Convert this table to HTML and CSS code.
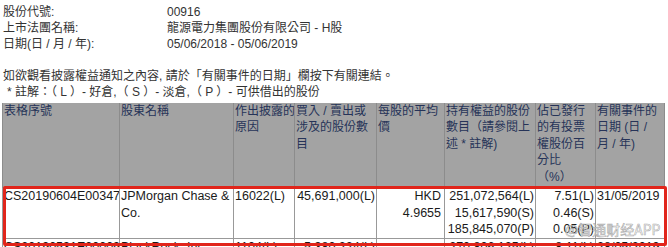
FILE: index.html
```html
<!DOCTYPE html>
<html lang="zh-Hant">
<head>
<meta charset="utf-8">
<link rel="stylesheet" href="styles.css">
</head>
<body>
<div class="page">
  <div class="info">
    <div class="info-row"><span class="info-label">股份代號:</span><span class="info-value">00916</span></div>
    <div class="info-row"><span class="info-label">上市法團名稱:</span><span class="info-value">龍源電力集團股份有限公司 - H股</span></div>
    <div class="info-row"><span class="info-label">日期(日 / 月 / 年):</span><span class="info-value">05/06/2018 - 05/06/2019</span></div>
  </div>
  <p class="note">如欲觀看披露權益通知之內容, 請於「有關事件的日期」欄按下有關連結。</p>
  <p class="note note-indent">* 註解：（ L ）- 好倉,（ S ）- 淡倉,（ P ）- 可供借出的股份</p>
  <div class="table-wrap">
    <table class="grid">
      <colgroup>
        <col class="c1"><col class="c2"><col class="c3"><col class="c4">
        <col class="c5"><col class="c6"><col class="c7"><col class="c8">
      </colgroup>
      <thead>
        <tr>
          <th>表格序號</th>
          <th>股東名稱</th>
          <th>作出披露的<br>原因</th>
          <th>買入 / 賣出或<br>涉及的股份數<br>目</th>
          <th>每股的平均<br>價</th>
          <th>持有權益的股份<br>數目（請參閱上<br>述 * 註解)</th>
          <th>佔已發行<br>的有投票<br>權股份百<br>分比<br>（%）</th>
          <th>有關事件的<br>日期 (日 /<br>月 / 年)</th>
        </tr>
      </thead>
      <tbody>
        <tr>
          <td>CS20190604E00347</td>
          <td>JPMorgan Chase &amp; Co.</td>
          <td>16022(L)</td>
          <td class="num">45,691,000(L)</td>
          <td class="num price">HKD<br>4.9655</td>
          <td class="num">251,072,564(L)<br>15,617,590(S)<br>185,845,070(P)</td>
          <td class="num">7.51(L)<br>0.46(S)<br>0.05(P)</td>
          <td>31/05/2019</td>
        </tr>
        <tr>
          <td>CS20190531E00009</td>
          <td>BlackRock, Inc.</td>
          <td>1104(L)</td>
          <td class="num">5,380,224(L)</td>
          <td class="num price"></td>
          <td class="num">270,806,125(L)</td>
          <td class="num">8.11(L)</td>
          <td>28/05/2019</td>
        </tr>
      </tbody>
    </table>
    <div class="highlight"></div>
    <div class="watermark">@智通财经APP</div>
  </div>
</div>
</body>
</html>
```

FILE: styles.css
```css
html, body {
  margin: 0;
  padding: 0;
  background: #ffffff;
}

body {
  font-family: "Liberation Sans", "Noto Sans CJK TC", sans-serif;
  font-size: 12px;
  color: #333333;
  overflow: hidden;
}

.page {
  padding: 4px 0 0 3px;
}

.info-row {
  display: flex;
  line-height: 16px;
  height: 16px;
}

.info-label {
  width: 164px;
  flex: none;
}

.note {
  margin: 0;
  line-height: 16px;
}

.info + .note {
  margin-top: 16px;
}

.note-indent {
  padding-left: 4px;
}

.table-wrap {
  position: relative;
  margin-top: 3px;
  margin-left: -1px;
}

.grid {
  border-collapse: collapse;
  table-layout: fixed;
  width: 662px;
}

.c1 { width: 117px; }
.c2 { width: 114px; }
.c3 { width: 61px; }
.c4 { width: 82px; }
.c5 { width: 68px; }
.c6 { width: 91px; }
.c7 { width: 60px; }
.c8 { width: 69px; }

.grid th {
  background: #a3a3a3;
  color: #263358;
  font-weight: normal;
  font-size: 12px;
  line-height: 16.4px;
  text-align: left;
  vertical-align: top;
  padding: 0 0 2px 1px;
  border: 1px solid #8c8c8c;
  border-top: none;
  height: 82px;
  white-space: nowrap;
  overflow: hidden;
}

.grid td {
  font-size: 12.5px;
  line-height: 16.5px;
  color: #1a1a1a;
  vertical-align: top;
  padding: 0 1px 0 1px;
  border: 1px solid #999999;
  height: 47px;
  overflow: hidden;
  white-space: nowrap;
}

.grid td:nth-child(2) {
  white-space: normal;
}

.grid tbody tr:last-child td {
  height: 16px;
}

.grid td.num {
  text-align: right;
}

.grid td.price {
  padding-right: 3px;
}

.highlight {
  position: absolute;
  left: 1px;
  top: 83px;
  width: 658px;
  height: 54px;
  border: 3px solid #e1251b;
  border-radius: 2px;
}

.watermark {
  position: absolute;
  left: 563px;
  top: 117px;
  font-family: "Noto Sans CJK SC", sans-serif;
  font-size: 14px;
  line-height: 18px;
  color: rgba(255, 255, 255, 0.75);
  -webkit-text-stroke: 0.6px rgba(150, 150, 150, 0.8);
  white-space: nowrap;
}
```
